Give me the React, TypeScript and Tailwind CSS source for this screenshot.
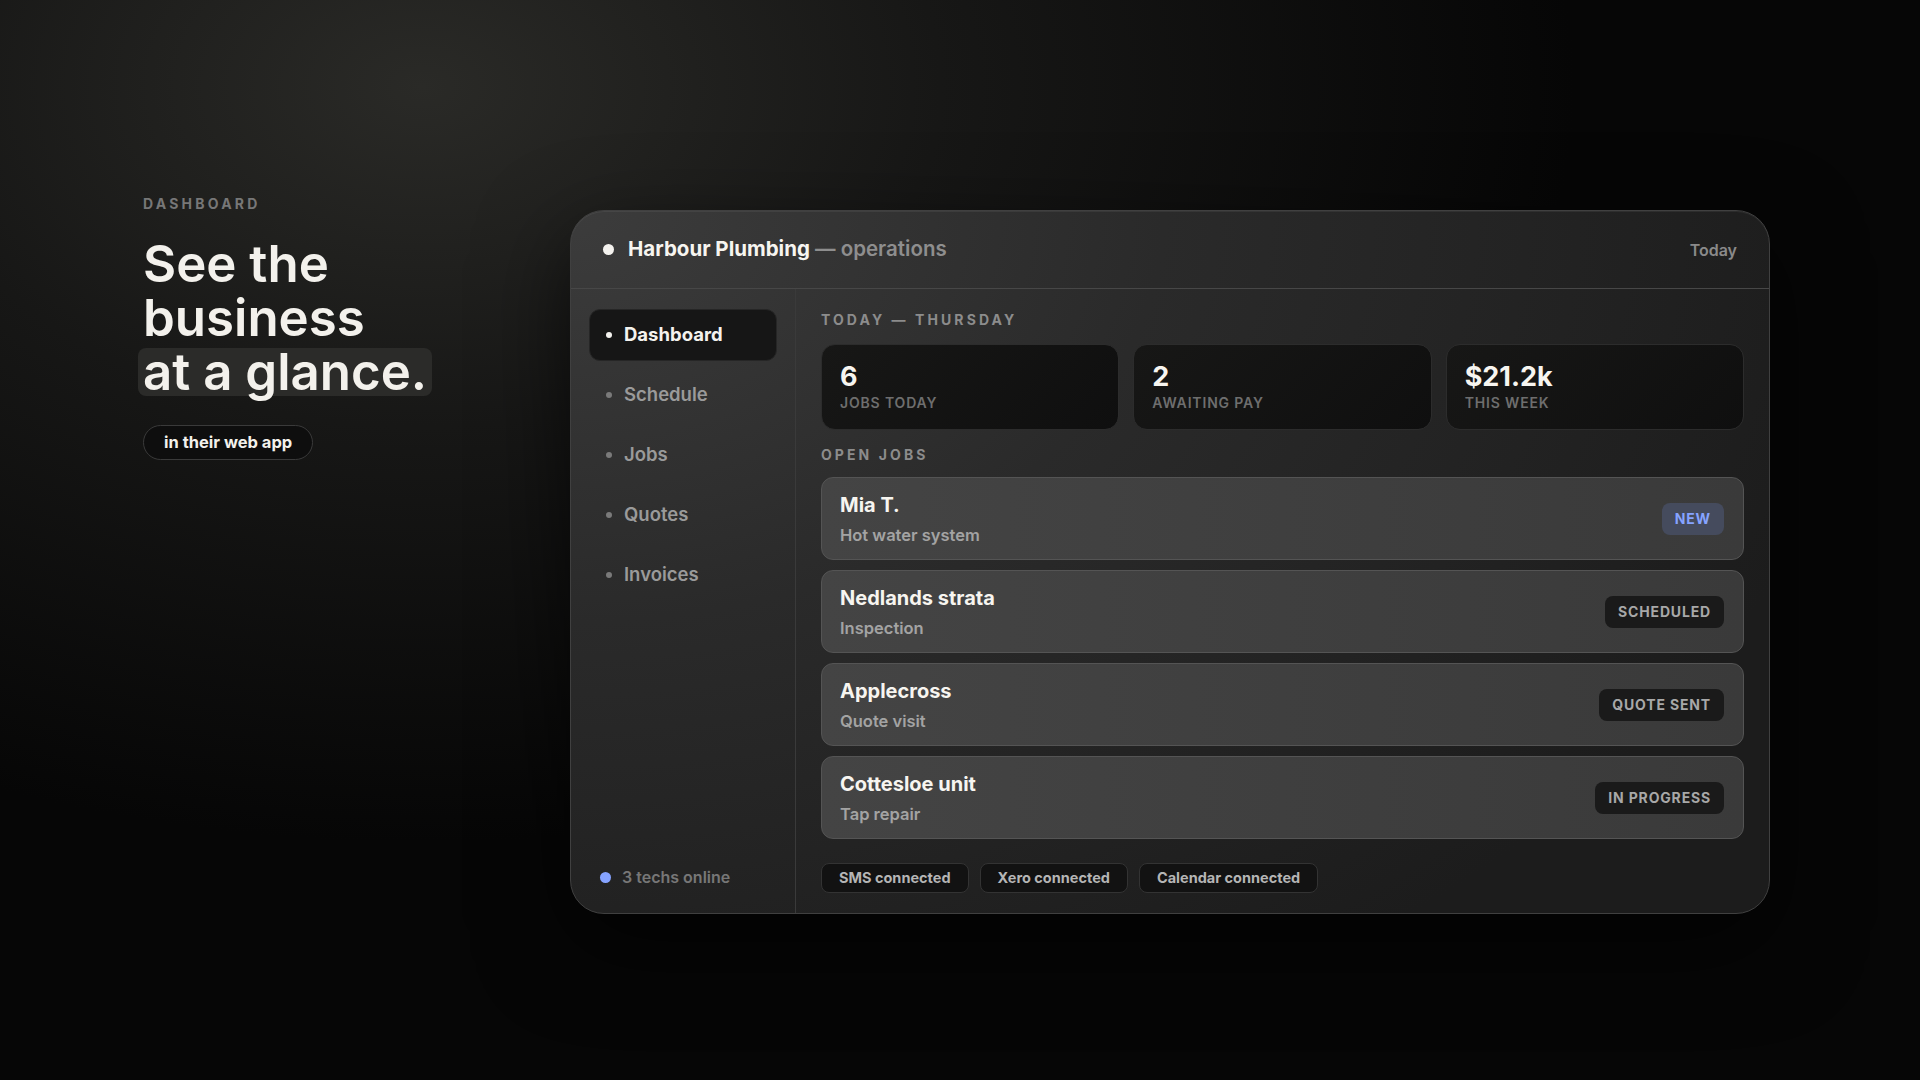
import React from "react";

type Job = {
  name: string;
  task: string;
  status: string;
  tone?: "new";
};

const NAV = ["Dashboard", "Schedule", "Jobs", "Quotes", "Invoices"];

const STATS = [
  { value: "6", label: "Jobs today" },
  { value: "2", label: "Awaiting pay" },
  { value: "$21.2k", label: "This week" },
];

const JOBS: Job[] = [
  { name: "Mia T.", task: "Hot water system", status: "New", tone: "new" },
  { name: "Nedlands strata", task: "Inspection", status: "Scheduled" },
  { name: "Applecross", task: "Quote visit", status: "Quote sent" },
  { name: "Cottesloe unit", task: "Tap repair", status: "In progress" },
];

const LINKS = ["SMS connected", "Xero connected", "Calendar connected"];

function Sidebar() {
  return (
    <aside className="flex w-[225px] flex-none flex-col border-r border-[#3a3a3a] px-[18px] pb-[24px] pt-5">
      <nav className="flex flex-col gap-2">
        {NAV.map((item, i) => {
          const active = i === 0;
          return (
            <div
              key={item}
              className={
                active
                  ? "flex h-[52px] items-center gap-3 rounded-[11px] border border-[#262626] bg-[#161616] px-4 text-[18.5px] font-bold text-[#f4f2ee]"
                  : "flex h-[52px] items-center gap-3 rounded-[11px] border border-transparent px-4 text-[18.5px] font-semibold text-[#9a9a9a]"
              }
            >
              <span
                className={
                  active
                    ? "h-[6px] w-[6px] rounded-full bg-[#f4f2ee]"
                    : "h-[6px] w-[6px] rounded-full bg-[#7a7a7a]"
                }
              />
              {item}
            </div>
          );
        })}
      </nav>
      <div className="mt-auto flex items-center gap-[11px] pl-[11px] text-[16px] font-semibold text-[#777]">
        <span className="h-[11px] w-[11px] rounded-full bg-[#86a3ff]" />
        3 techs online
      </div>
    </aside>
  );
}

function JobRow({ job }: { job: Job }) {
  return (
    <div className="flex h-[83px] items-center justify-between rounded-[12px] border border-[#545454] bg-[linear-gradient(90deg,#444444,#3a3a3a)] pl-[18px] pr-[19px]">
      <div className="flex flex-col gap-2">
        <span className="text-[20px] font-bold leading-6 text-[#f7f5f0]">
          {job.name}
        </span>
        <span className="text-[16.5px] font-semibold leading-5 text-[#a3a3a3]">
          {job.task}
        </span>
      </div>
      <span
        className={
          job.tone === "new"
            ? "flex h-8 items-center rounded-[8px] bg-[#454b5d] px-[13px] text-[14px] font-bold uppercase tracking-[0.06em] text-[#86a3ff]"
            : "flex h-8 items-center rounded-[8px] bg-[#1a1a1a] px-[13px] text-[14px] font-bold uppercase tracking-[0.06em] text-[#a8a8a8]"
        }
      >
        {job.status}
      </span>
    </div>
  );
}

function Main() {
  return (
    <section className="flex min-w-0 flex-1 flex-col px-[25px] pb-5 pt-[23px]">
      <h3 className="text-[14px] font-bold uppercase leading-4 tracking-[0.22em] text-[#8c8c8c]">
        Today — Thursday
      </h3>
      <div className="mt-4 grid grid-cols-3 gap-[14px]">
        {STATS.map((s) => (
          <div
            key={s.label}
            className="flex h-[86px] flex-col justify-center gap-1 rounded-[14px] border border-[#2c2c2c] bg-[linear-gradient(135deg,#171716,#0f0f0f)] px-[18px]"
          >
            <span className="text-[27px] font-bold leading-7 text-[#f7f5f0]">
              {s.value}
            </span>
            <span className="text-[14px] font-semibold uppercase leading-4 tracking-[0.06em] text-[#6e6e6e]">
              {s.label}
            </span>
          </div>
        ))}
      </div>
      <h3 className="mt-[17px] text-[14px] font-bold uppercase leading-4 tracking-[0.22em] text-[#8c8c8c]">
        Open jobs
      </h3>
      <div className="mt-[14px] flex flex-col gap-[10px]">
        {JOBS.map((j) => (
          <JobRow key={j.name} job={j} />
        ))}
      </div>
      <div className="mt-auto flex gap-[11px]">
        {LINKS.map((l) => (
          <span
            key={l}
            className="flex h-[30px] items-center rounded-[8px] border border-[#333] bg-[#121212] px-[17px] text-[14.5px] font-bold text-[#b5b5b5]"
          >
            {l}
          </span>
        ))}
      </div>
    </section>
  );
}

export default function App() {
  return (
    <div className="h-[1080px] w-full overflow-hidden bg-[radial-gradient(ellipse_60%_70%_at_22%_8%,#2a2a27_0%,#171716_45%,#060606_100%)] font-['Inter','Liberation_Sans',sans-serif]">
      <div className="flex items-start pl-[143px] pr-[150px] pt-[196px]">
        <div className="w-[427px] flex-none">
          <p className="text-[14px] font-bold uppercase leading-4 tracking-[0.23em] text-[#777]">
            Dashboard
          </p>
          <h1 className="mt-[25px] text-[51px] font-semibold leading-[54px] text-[#f3f1ec]">
            <span className="block">See the</span>
            <span className="block">business</span>
            <span className="-ml-[5px] inline-block rounded-[8px] bg-[#2b2b29] px-[5px] leading-[48px]">
              at a glance.
            </span>
          </h1>
          <div className="mt-[26px] inline-flex h-[35px] items-center rounded-full border border-[#3a3a3a] bg-[#0e0e0e] px-[20px] text-[16.5px] font-bold text-[#f3f1ec]">
            in their web app
          </div>
        </div>
        <div className="mt-[14px] flex h-[704px] flex-1 flex-col overflow-hidden rounded-[34px] border border-[#404040] bg-[radial-gradient(ellipse_110%_130%_at_0%_0%,#3c3c3c_0%,#2a2a2a_45%,#1c1c1c_100%)] shadow-[0_30px_90px_rgba(0,0,0,0.65),inset_0_1px_0_rgba(255,255,255,0.06)]">
          <header className="flex h-[78px] flex-none items-center justify-between border-b border-[#474747] px-8">
            <div className="flex items-center gap-[14px] text-[20.5px]">
              <span className="h-[11px] w-[11px] rounded-full bg-[#f4f2ee]" />
              <span>
                <span className="font-bold text-[#f7f5f0]">Harbour Plumbing</span>
                <span className="font-semibold text-[#8e8e8e]"> — operations</span>
              </span>
            </div>
            <span className="text-[16px] font-semibold text-[#8a8a8a]">Today</span>
          </header>
          <div className="flex min-h-0 flex-1">
            <Sidebar />
            <Main />
          </div>
        </div>
      </div>
    </div>
  );
}
